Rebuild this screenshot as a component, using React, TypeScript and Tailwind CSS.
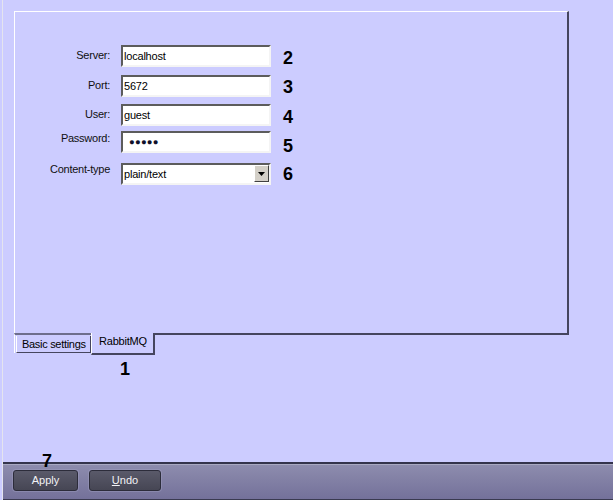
import React from "react";

const font = { fontFamily: '"Liberation Sans", Arial, sans-serif' };

function Field({
  label,
  value,
  num,
  top,
  labelPt,
  numPt,
  password,
  select,
}: {
  label: string;
  value: string;
  num: string;
  top: string;
  labelPt: string;
  numPt: string;
  password?: boolean;
  select?: boolean;
}) {
  return (
    <div className={`flex items-start ${top}`}>
      <div className={`w-[95px] text-right text-[11px] leading-[13px] tracking-[-0.25px] text-[#101010] ${labelPt}`}>{label}</div>
      <div className="ml-[11px] relative h-[22px] w-[150px] border-2 border-t-[#5c5c5c] border-l-[#5c5c5c] border-r-[#f4f4f4] border-b-[#f4f4f4] bg-white">
        {password ? (
          <div className="pl-[6px] pt-[2px] text-[9.5px] leading-[14px] tracking-[0.2px] text-[#10102a]">●●●●●</div>
        ) : (
          <div className="pl-[1px] pt-[2px] text-[11px] leading-[14px] tracking-[-0.2px] text-black">{value}</div>
        )}
        {select && (
          <div className="absolute right-[0px] top-[0px] flex h-[17px] w-[15px] items-center justify-center border border-t-white border-l-white border-r-[#404040] border-b-[#404040] bg-[#d4d0c8]">
            <svg width="7" height="4" viewBox="0 0 7 4">
              <path d="M0 0H7L3.5 4Z" fill="#000" />
            </svg>
          </div>
        )}
      </div>
      <div className={`ml-[12px] text-[18px] font-bold leading-[18px] text-black ${numPt}`}>{num}</div>
    </div>
  );
}

export default function App() {
  return (
    <div className="h-[500px] w-[613px] overflow-hidden bg-[#ccccff]" style={font}>
      <div className="ml-[2px] flex h-[500px] flex-col border-l border-[#e4e4ee]">
        <div className="flex flex-1 flex-col">
          <div className="ml-[11px] mt-[11px] h-[322px] w-[555px] border-l border-t border-r-2 border-l-white border-t-white border-r-[#45455e] pt-[33px]">
            <Field label="Server:" value="localhost" num="2" top="" labelPt="pt-[4px]" numPt="pt-[4px]" />
            <Field label="Port:" value="5672" num="3" top="mt-[8px]" labelPt="pt-[4px]" numPt="pt-[3px]" />
            <Field label="User:" value="guest" num="4" top="mt-[7px]" labelPt="pt-[4px]" numPt="pt-[4px]" />
            <Field label="Password:" value="" num="5" top="mt-[5px]" labelPt="pt-[1px]" numPt="pt-[6px]" password />
            <Field label="Content-type" value="plain/text" num="6" top="mt-[8px]" labelPt="pt-[0px]" numPt="pt-[2px]" select />
          </div>
          <div className="ml-[11px] flex w-[555px] items-start">
            <div className="w-[77px] border-l border-t-2 border-l-white border-t-[#6e6e8c]">
              <div className="ml-[1px] mt-[1px] flex h-[17px] w-[75px] items-center border-b border-l border-r border-b-[#45455e] border-l-white border-r-[#45455e] pl-[5px] text-[11px] tracking-[-0.3px] text-black">
                Basic settings
              </div>
            </div>
            <div className="flex h-[22px] w-[64px] items-start border-b-2 border-l border-r-2 border-b-[#45455e] border-l-white border-r-[#45455e] pl-[7px] pt-[2px] text-[11px] leading-[13px] tracking-[-0.2px] text-black">
              RabbitMQ
            </div>
            <div className="flex-1 border-t-2 border-t-[#45455e]" />
          </div>
          <div className="ml-[117px] mt-[5px] text-[18px] font-bold leading-[18px] text-black">1</div>
        </div>
        <div className="relative flex h-[38px] items-start gap-[11px] border-t-2 border-b border-t-[#34344c] border-b-[#3a3a50] bg-gradient-to-b from-[#8e8dae] to-[#74719a] pl-[10px] pt-[6px] shadow-[inset_0_1px_0_#a9a9c2]">
          <div className="absolute left-[39px] top-[-12px] text-[18px] font-bold leading-[18px] text-black">7</div>
          <div className="flex h-[21px] w-[65px] items-center justify-center rounded-[3px] border border-[#2c2c3a] bg-gradient-to-b from-[#5a5a6a] to-[#464654] text-[11px] text-[#f2f2f6] shadow-[0_0_0_1px_rgba(170,170,200,0.35)]">
            Apply
          </div>
          <div className="flex h-[21px] w-[72px] items-center justify-center rounded-[3px] border border-[#2c2c3a] bg-gradient-to-b from-[#5a5a6a] to-[#464654] text-[11px] text-[#f2f2f6] shadow-[0_0_0_1px_rgba(170,170,200,0.35)]">
            <span className="underline underline-offset-[1px]">U</span>ndo
          </div>
        </div>
      </div>
    </div>
  );
}
